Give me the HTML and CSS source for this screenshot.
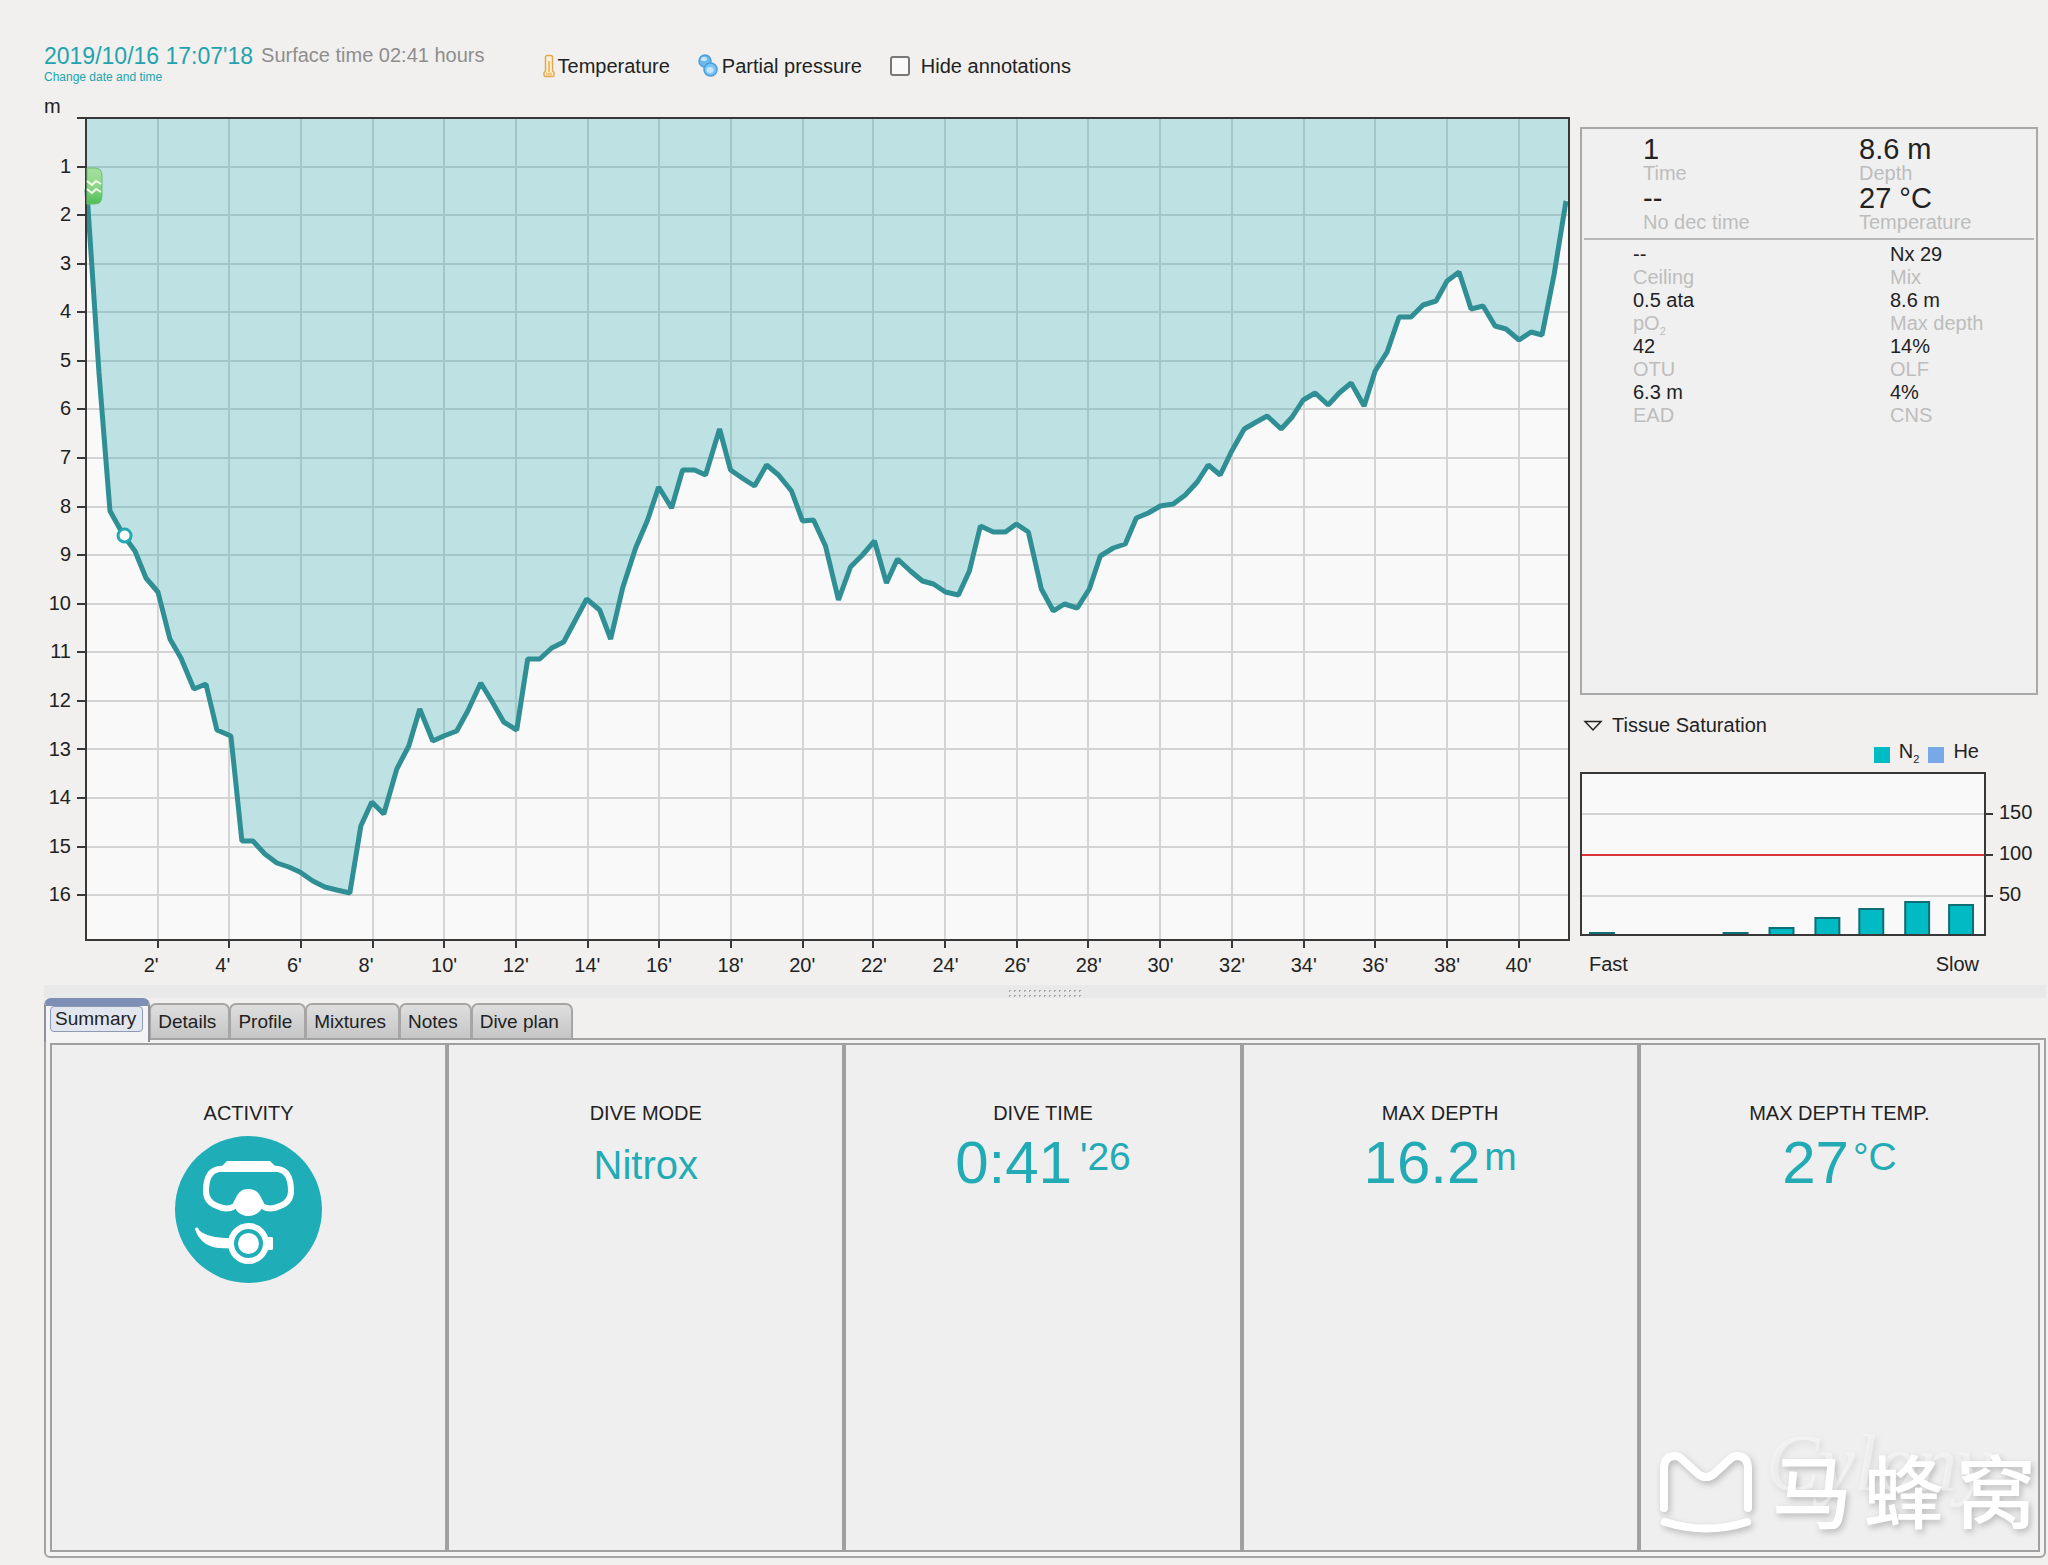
FILE: index.html
```html
<!DOCTYPE html>
<html lang="en">
<head>
<meta charset="utf-8">
<title>Dive log</title>
<link rel="stylesheet" href="styles.css">
</head>
<body>
<div class="app">
  <main class="overview">
    <section class="profile">
      <header class="toolbar">
        <div class="when">
          <div class="date">2019/10/16 17:07'18</div>
          <a class="change" href="#">Change date and time</a>
        </div>
        <div class="surface">Surface time 02:41 hours</div>
        <div class="tools">
          <button class="tool tool-temp" type="button">
            <svg width="12" height="24" viewBox="0 0 12 24"><path d="M2.500 17V3.500Q2.500 1.500 4.500 1.500H7.500Q9.500 1.500 9.500 3.500V17L11 18.500V21Q11 22.500 9.500 22.500H2.500Q1 22.500 1 21V18.500Z" fill="#fdf3dc" stroke="#e2a94c" stroke-width="1.500"/><path d="M6 7V18" stroke="#f0bd62" stroke-width="2"/><path d="M3 20H9" stroke="#f3c878" stroke-width="3"/></svg>
            Temperature
          </button>
          <button class="tool tool-pressure" type="button">
            <svg width="20" height="24" viewBox="0 0 20 24"><g stroke="#4a9fdc" stroke-width="1.500"><circle cx="7" cy="7" r="6" fill="#6fb8ea"/><circle cx="12.500" cy="15.500" r="6.500" fill="#7cc4f2"/></g><ellipse cx="6" cy="5" rx="3" ry="2" fill="#c9e8fb"/><ellipse cx="12" cy="16" rx="3.500" ry="3" fill="#c4e6fb"/></svg>
            Partial pressure
          </button>
          <label class="hide"><input type="checkbox"> Hide annotations</label>
        </div>
      </header>
      <div class="unit">m</div>
      <svg class="depth-chart" role="img" aria-label="Depth by time">
        <svg viewBox="86 119 1484 822" width="100%" height="100%" preserveAspectRatio="none" overflow="visible">
          <rect x="86" y="119" width="1484" height="822" fill="#f9f9f9"/>
          <path class="grid" d="M86 168H1570M86 216H1570M86 265H1570M86 313H1570M86 362H1570M86 410H1570M86 459H1570M86 508H1570M86 556H1570M86 605H1570M86 653H1570M86 702H1570M86 750H1570M86 799H1570M86 848H1570M86 896H1570M158 119V941M229 119V941M301 119V941M373 119V941M444 119V941M516 119V941M588 119V941M659 119V941M731 119V941M803 119V941M874 119V941M946 119V941M1018 119V941M1089 119V941M1161 119V941M1233 119V941M1305 119V941M1376 119V941M1448 119V941M1520 119V941"/>
          <path class="water" d="M86 119V190L88 209L99 374L110 512L124 537L135 552L146 579L158 593L170 640L181 659L194 690L206 685L217 731L231 737L242 842L253 842L265 855L277 864L289 868L300 873L313 882L325 888L337 891L350 894L361 827L372 803L384 815L397 770L409 747L420 710L433 742L444 737L457 732L468 712L481 684L492 702L504 723L517 731L528 660L540 660L552 649L564 643L587 600L600 611L611 640L623 589L636 549L648 521L659 488L672 509L683 471L695 471L706 476L720 430L731 471L744 480L755 487L767 466L779 476L792 492L803 522L814 521L826 547L839 601L851 568L863 556L875 542L887 584L898 560L911 572L923 582L934 585L946 593L959 596L970 572L981 527L994 533L1006 533L1017 525L1029 533L1042 590L1054 612L1065 605L1078 609L1090 590L1101 557L1114 549L1126 545L1137 519L1149 514L1161 507L1174 505L1186 496L1198 483L1209 466L1221 476L1232 453L1245 430L1257 423L1268 417L1282 430L1293 418L1304 401L1316 394L1329 406L1340 394L1352 384L1365 407L1376 372L1388 353L1400 318L1412 318L1424 306L1437 302L1448 282L1460 273L1472 310L1484 307L1496 327L1507 330L1520 341L1532 333L1543 336L1555 276L1567 202L1570 200V119Z"/>
          <path class="trace" d="M87 190L88 209L99 374L110 512L124 537L135 552L146 579L158 593L170 640L181 659L194 690L206 685L217 731L231 737L242 842L253 842L265 855L277 864L289 868L300 873L313 882L325 888L337 891L350 894L361 827L372 803L384 815L397 770L409 747L420 710L433 742L444 737L457 732L468 712L481 684L492 702L504 723L517 731L528 660L540 660L552 649L564 643L587 600L600 611L611 640L623 589L636 549L648 521L659 488L672 509L683 471L695 471L706 476L720 430L731 471L744 480L755 487L767 466L779 476L792 492L803 522L814 521L826 547L839 601L851 568L863 556L875 542L887 584L898 560L911 572L923 582L934 585L946 593L959 596L970 572L981 527L994 533L1006 533L1017 525L1029 533L1042 590L1054 612L1065 605L1078 609L1090 590L1101 557L1114 549L1126 545L1137 519L1149 514L1161 507L1174 505L1186 496L1198 483L1209 466L1221 476L1232 453L1245 430L1257 423L1268 417L1282 430L1293 418L1304 401L1316 394L1329 406L1340 394L1352 384L1365 407L1376 372L1388 353L1400 318L1412 318L1424 306L1437 302L1448 282L1460 273L1472 310L1484 307L1496 327L1507 330L1520 341L1532 333L1543 336L1555 276L1567 202"/>
          <path class="axis" d="M86 119H1570V941H86ZM77 119H86M77 168H86M77 216H86M77 265H86M77 313H86M77 362H86M77 410H86M77 459H86M77 508H86M77 556H86M77 605H86M77 653H86M77 702H86M77 750H86M77 799H86M77 848H86M77 896H86M158 941V949M229 941V949M301 941V949M373 941V949M444 941V949M516 941V949M588 941V949M659 941V949M731 941V949M803 941V949M874 941V949M946 941V949M1018 941V949M1089 941V949M1161 941V949M1233 941V949M1305 941V949M1376 941V949M1448 941V949M1520 941V949"/>
        </svg>
        <defs>
          <linearGradient id="badge" x1="0" y1="0" x2="0" y2="1"><stop offset="0" stop-color="#a5e0a0"/><stop offset=".5" stop-color="#8dd68a"/><stop offset="1" stop-color="#4dbd55"/></linearGradient>
        </defs>
        <path d="M1 50H9Q16 50 16 58V78Q16 86 9 86H1Z" fill="url(#badge)" stroke="#6cbf70"/>
        <path d="M1 63L6 67L10 63L15 66M1 71L6 75L10 71L15 74" fill="none" stroke="#effbe8" stroke-width="2"/>
        <circle cx="2.6%" cy="50.8%" r="6.500" fill="#fff" stroke="#22a9b3" stroke-width="3"/>
        <g text-anchor="end">
          <text y="5.91%" dx="-15" dy="6">1</text>
          <text y="11.82%" dx="-15" dy="6">2</text>
          <text y="17.73%" dx="-15" dy="6">3</text>
          <text y="23.64%" dx="-15" dy="6">4</text>
          <text y="29.55%" dx="-15" dy="6">5</text>
          <text y="35.46%" dx="-15" dy="6">6</text>
          <text y="41.37%" dx="-15" dy="6">7</text>
          <text y="47.28%" dx="-15" dy="6">8</text>
          <text y="53.19%" dx="-15" dy="6">9</text>
          <text y="59.1%" dx="-15" dy="6">10</text>
          <text y="65.01%" dx="-15" dy="6">11</text>
          <text y="70.92%" dx="-15" dy="6">12</text>
          <text y="76.83%" dx="-15" dy="6">13</text>
          <text y="82.74%" dx="-15" dy="6">14</text>
          <text y="88.65%" dx="-15" dy="6">15</text>
          <text y="94.56%" dx="-15" dy="6">16</text>
        </g>
        <g text-anchor="end">
          <text x="4.83%" y="100%" dx="1" dy="32">2'</text>
          <text x="9.66%" y="100%" dx="1" dy="32">4'</text>
          <text x="14.49%" y="100%" dx="1" dy="32">6'</text>
          <text x="19.32%" y="100%" dx="1" dy="32">8'</text>
        </g>
        <g text-anchor="middle">
          <text x="24.15%" y="100%" dy="32">10'</text>
          <text x="28.98%" y="100%" dy="32">12'</text>
          <text x="33.81%" y="100%" dy="32">14'</text>
          <text x="38.64%" y="100%" dy="32">16'</text>
          <text x="43.47%" y="100%" dy="32">18'</text>
          <text x="48.3%" y="100%" dy="32">20'</text>
          <text x="53.13%" y="100%" dy="32">22'</text>
          <text x="57.96%" y="100%" dy="32">24'</text>
          <text x="62.79%" y="100%" dy="32">26'</text>
          <text x="67.62%" y="100%" dy="32">28'</text>
          <text x="72.45%" y="100%" dy="32">30'</text>
          <text x="77.28%" y="100%" dy="32">32'</text>
          <text x="82.11%" y="100%" dy="32">34'</text>
          <text x="86.94%" y="100%" dy="32">36'</text>
          <text x="91.77%" y="100%" dy="32">38'</text>
          <text x="96.6%" y="100%" dy="32">40'</text>
        </g>
      </svg>
    </section>

    <aside class="side">
      <div class="readings">
        <dl class="primary">
          <div><dd>1</dd><dt>Time</dt></div>
          <div><dd>8.6 m</dd><dt>Depth</dt></div>
          <div><dd>--</dd><dt>No dec time</dt></div>
          <div><dd>27 °C</dd><dt>Temperature</dt></div>
        </dl>
        <dl class="secondary">
          <div><dd>--</dd><dt>Ceiling</dt></div>
          <div><dd>Nx 29</dd><dt>Mix</dt></div>
          <div><dd>0.5 ata</dd><dt>pO<sub>2</sub></dt></div>
          <div><dd>8.6 m</dd><dt>Max depth</dt></div>
          <div><dd>42</dd><dt>OTU</dt></div>
          <div><dd>14%</dd><dt>OLF</dt></div>
          <div><dd>6.3 m</dd><dt>EAD</dt></div>
          <div><dd>4%</dd><dt>CNS</dt></div>
        </dl>
      </div>
      <details class="tissue" open>
        <summary><svg width="20" height="14" viewBox="0 0 20 14"><path d="M2 3.500H18L10 12Z" fill="none" stroke="#222" stroke-width="1.500"/></svg>Tissue Saturation</summary>
        <div class="legend">
          <i class="swatch n2"></i><span>N<sub>2</sub></span>
          <i class="swatch he"></i><span>He</span>
        </div>
        <svg class="tissue-chart" role="img" aria-label="Tissue saturation by compartment">
          <svg viewBox="0 0 405 162" width="100%" height="100%" preserveAspectRatio="none" overflow="visible">
            <rect width="405" height="162" fill="#f9f9f9"/>
            <path class="grid" d="M0 41H405M0 123H405"/>
            <path class="limit" d="M0 82H405"/>
            <path class="bars" d="M9 162V160H33V162M143 162V160H167V162M189 162V155H213V162M235 162V145H259V162M279 162V136H303V162M325 162V129H349V162M369 162V132H393V162"/>
            <path class="axis" d="M0 0H405V162H0ZM405 41H413M405 82H413M405 123H413"/>
          </svg>
          <text x="100%" y="46" dx="14">150</text>
          <text x="100%" y="87" dx="14">100</text>
          <text x="100%" y="128" dx="14">50</text>
        </svg>
        <div class="range"><span>Fast</span><span>Slow</span></div>
      </details>
    </aside>
  </main>

  <div class="splitter"></div>

  <nav class="tabs" role="tablist">
    <button class="tab active" type="button" role="tab" aria-selected="true"><span>Summary</span></button>
    <button class="tab" type="button" role="tab">Details</button>
    <button class="tab" type="button" role="tab">Profile</button>
    <button class="tab" type="button" role="tab">Mixtures</button>
    <button class="tab" type="button" role="tab">Notes</button>
    <button class="tab" type="button" role="tab">Dive plan</button>
  </nav>

  <section class="panel">
    <div class="cards">
      <article class="card">
        <h2>ACTIVITY</h2>
        <svg class="activity" viewBox="0 0 147 147" role="img" aria-label="Scuba">
          <circle cx="73.500" cy="73.500" r="73.500" fill="#1fadb8"/>
          <path d="M44 33Q31 35 31 55Q31 66 42 70Q52 75 60 70C65 60 66 56 73.500 56C81 56 82 60 87 70Q95 75 105 70Q116 66 116 55Q116 35 103 33Q73 31 44 33Z" fill="none" stroke="#fff" stroke-width="6"/>
          <path d="M52 25H95L101 31L99 36H48L47 30Z" fill="#fff"/>
          <path d="M62 67Q64 54 73.500 54Q83 54 85 67L86 74Q81 80 73.500 80Q66 80 61 74Z" fill="#fff"/>
          <path d="M20 93C21 91 23 91 24 94Q32 102 56 102V112Q27 115 20 93Z" fill="#fff"/>
          <path d="M88 101H97Q98 101 98 103V112Q98 114 97 114H88Z" fill="#fff"/>
          <circle cx="73.500" cy="107.500" r="17.500" fill="#1fadb8" stroke="#fff" stroke-width="6"/>
          <circle cx="73.500" cy="107.500" r="10.500" fill="#fff"/>
        </svg>
      </article>
      <article class="card">
        <h2>DIVE MODE</h2>
        <div class="value"><span class="minor">Nitrox</span></div>
      </article>
      <article class="card">
        <h2>DIVE TIME</h2>
        <div class="value"><span>0:41</span><span class="unit-mark seconds">'26</span></div>
      </article>
      <article class="card">
        <h2>MAX DEPTH</h2>
        <div class="value"><span>16.2</span><span class="unit-mark">m</span></div>
      </article>
      <article class="card">
        <h2>MAX DEPTH TEMP.</h2>
        <div class="value"><span>27</span><span class="unit-mark">°C</span></div>
      </article>
    </div>
  </section>

  <div class="watermark">
    <span class="signature">Cylony</span>
    <svg width="92" height="82" viewBox="0 0 92 82"><g fill="none" stroke="#fff" stroke-width="8" stroke-linecap="round"><path d="M4 57V16Q5 5 15 5Q19 5 23 9L38 23Q46 29 54 23L69 9Q73 5 77 5Q87 5 88 16V57"/><path d="M5 71Q46 84 87 71"/></g></svg>
    <span class="brand"><span>马</span><span>蜂</span><span>窝</span></span>
  </div>
</div>
</body>
</html>
```

FILE: styles.css
```css
* {
  box-sizing: border-box;
}

body {
  margin: 0;
  background: #f1f0ee;
  color: #222;
  font: 20px/24px "Liberation Sans", Arial, sans-serif;
}

button {
  border: 0;
  padding: 0;
  background: none;
  color: inherit;
  font: inherit;
}

dl, dd, h2 {
  margin: 0;
}

sub {
  font-size: 11px;
  line-height: 0;
}

text {
  fill: #222;
}

.app {
  position: relative;
  display: flex;
  flex-direction: column;
  min-height: 100vh;
  padding: 0 2px 7px 44px;
}

.overview {
  display: grid;
  grid-template-columns: minmax(0, 1fr) 458px;
  gap: 10px;
  padding-right: 8px;
}

/* Toolbar */

.toolbar {
  display: flex;
  padding-top: 43px;
}

.date {
  color: #22a3ad;
  font-size: 23px;
  line-height: 26px;
}

.change {
  display: block;
  color: #22a3ad;
  font-size: 12px;
  line-height: 16px;
  text-decoration: none;
}

.surface {
  margin-left: 8px;
  color: #8e8e8e;
}

.tools {
  display: flex;
  align-items: center;
  gap: 28px;
  margin-left: 58px;
  padding-top: 4px;
}

.tool {
  display: flex;
  align-items: center;
}

.tool-temp {
  gap: 3px;
}

.tool-pressure {
  gap: 4px;
}

.hide {
  display: flex;
  align-items: center;
  gap: 11px;
}

.hide input {
  appearance: none;
  width: 20px;
  height: 20px;
  margin: 0;
  border: 2px solid #777;
  border-radius: 3px;
  background: #f9f9f9;
}

/* Depth chart */

.unit {
  padding-top: 11px;
  line-height: 20px;
}

.depth-chart {
  display: block;
  width: calc(100% - 43px);
  height: 822px;
  margin: 2px 0 45px 42px;
  overflow: visible;
}

.grid, .axis, .limit, .trace, .bars {
  vector-effect: non-scaling-stroke;
}

.grid, .axis, .limit {
  fill: none;
  shape-rendering: crispEdges;
  stroke-width: 2px;
}

.grid {
  stroke: #d4d4d4;
}

.axis {
  stroke: #383838;
}

.water {
  fill: rgba(34, 168, 172, 0.27);
}

.trace {
  fill: none;
  stroke: #2f8f94;
  stroke-width: 5px;
  stroke-linejoin: bevel;
}

/* Readings */

.side {
  padding-top: 127px;
}

.readings {
  min-height: 568px;
  border: 2px solid #a8a8a8;
  background: #f0f0f0;
}

.primary, .secondary {
  display: grid;
}

.primary {
  grid-template-columns: 216px 1fr;
  margin: 0 2px;
  padding: 6px 0 5px 59px;
  border-bottom: 2px solid #b8b8b8;
}

.secondary {
  grid-template-columns: 257px 1fr;
  padding: 3px 0 0 51px;
}

.readings div {
  display: flex;
  flex-direction: column;
}

.readings dt {
  color: #bdbdbd;
}

.primary dd {
  font-size: 29px;
  line-height: 28px;
}

.primary dt {
  line-height: 21px;
}

.secondary dd, .secondary dt {
  line-height: 23px;
}

/* Tissue saturation */

.tissue {
  margin-top: 18px;
}

.tissue summary {
  display: flex;
  align-items: center;
  gap: 9px;
  padding-left: 3px;
  list-style: none;
}

.legend {
  display: flex;
  justify-content: flex-end;
  margin: 2px 59px 10px 0;
}

.swatch {
  width: 16px;
  height: 16px;
  margin: 8px 9px 0 0;
}

.n2 {
  background: #00bac4;
}

.he {
  margin-left: 9px;
  background: #76a9e6;
}

.tissue-chart {
  display: block;
  width: calc(100% - 54px);
  height: 162px;
  margin-left: 1px;
  overflow: visible;
}

.bars {
  fill: #00bac4;
  stroke: #0f6e73;
  stroke-width: 2px;
}

.limit {
  stroke: #d8343a;
}

.range {
  display: flex;
  justify-content: space-between;
  margin: 17px 59px 0 9px;
}

/* Splitter and tabs */

.splitter {
  height: 13px;
  padding: 3px calc(50% - 38px) 0;
  background:
    radial-gradient(circle, #aaa 1px, transparent 1px) 0 0 / 5px 5px content-box content-box,
    #e9e9e9;
}

.tabs {
  display: flex;
  align-items: flex-end;
  height: 40px;
  font-size: 19px;
}

.tab {
  height: 35px;
  margin-left: -1px;
  padding: 5px 12px 4px 7px;
  border: 2px solid #a8a6a4;
  border-bottom: 0;
  border-radius: 7px 7px 0 0;
  background: linear-gradient(#dedede, #c6c6c6);
}

.tab.active {
  z-index: 1;
  height: 44px;
  margin: 0 0 -4px;
  padding: 0 5px 10px 4px;
  border-color: #8e9099;
  border-top: 8px solid #7e8fb5;
  background: #f4f4f4;
}

.tab.active span {
  display: block;
  padding: 0 6px 0 4px;
  border: 1px solid #8f9bb5;
  border-radius: 4px;
  background: #e2e6ee;
}

/* Summary panel */

.panel {
  display: flex;
  flex: 1;
  padding: 3px 4px 4px;
  border: 2px solid #a3a3a3;
  border-radius: 0 0 6px 6px;
  background: #f3f3f3;
}

.cards {
  display: grid;
  flex: 1;
  grid-template-columns: repeat(5, 1fr);
  border: 2px solid #a0a0a0;
  background: #f0eff0;
}

.card {
  display: flex;
  flex-direction: column;
  align-items: center;
  min-height: 300px;
  padding-top: 56px;
  border-right: 4px solid #a0a0a0;
}

.card:last-child {
  border-right: 0;
}

.card h2 {
  margin-bottom: 3px;
  font-size: 20px;
  font-weight: normal;
}

.activity {
  width: 147px;
  height: 147px;
  margin-top: 8px;
}

.value {
  display: flex;
  gap: 4px;
  color: #22abb5;
  font-size: 60px;
  line-height: 70px;
}

.minor {
  font-size: 40px;
  line-height: 74px;
}

.unit-mark {
  font-size: 39px;
  line-height: 58px;
}

.seconds {
  margin-left: 4px;
}

/* Watermark */

.watermark {
  position: absolute;
  right: 12px;
  bottom: 23px;
  display: flex;
  align-items: center;
  gap: 20px;
  color: #fff;
  filter: drop-shadow(2px 3px 3px rgba(0, 0, 0, 0.22));
}

.brand {
  display: flex;
  gap: 12px;
  padding-bottom: 10px;
  font: 500 80px/90px "Noto Sans CJK SC", sans-serif;
}

.signature {
  position: absolute;
  top: -24px;
  left: 106px;
  font: italic 80px/90px "Liberation Serif", serif;
  opacity: 0.4;
}
```
